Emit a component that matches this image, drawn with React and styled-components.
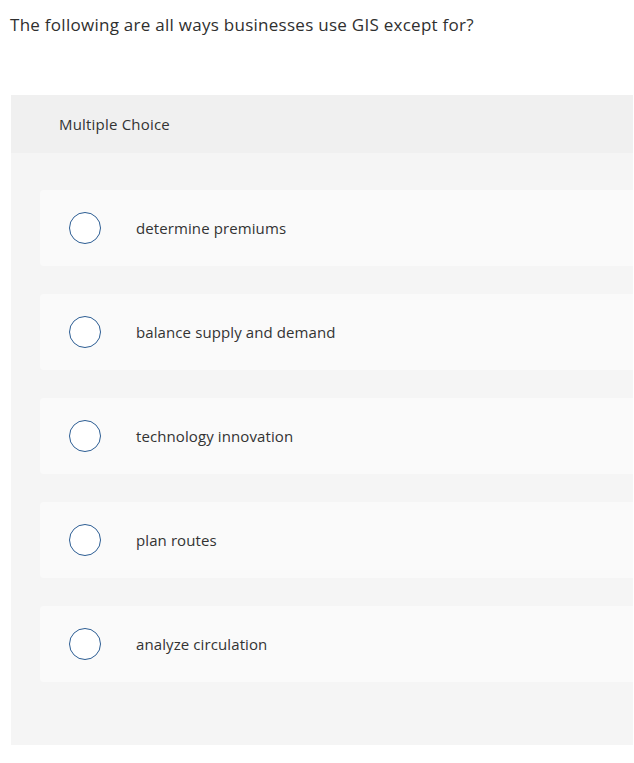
import React from "react";
import styled, { createGlobalStyle } from "styled-components";

const Global = createGlobalStyle`
  html, body { margin: 0; padding: 0; background: #ffffff; }
  body { font-family: "Open Sans", "Liberation Sans", sans-serif; color: #333333; }
  * { box-sizing: border-box; }
`;

const Page = styled.div`
  width: 634px;
  padding: 14px 0 0 0;
`;

const Question = styled.p`
  margin: 0 0 0 10px;
  font-size: 17px;
  line-height: 22px;
  letter-spacing: 0.27px;
  color: #2f2f2f;
`;

const Panel = styled.section`
  margin: 59px 1px 0 11px;
  background: #f5f5f5;
`;

const PanelHeader = styled.div`
  height: 58px;
  background: #f0f0f0;
  display: flex;
  align-items: center;
  padding-left: 48px;
  font-size: 15px;
  letter-spacing: 0.2px;
  color: #333333;
`;

const Options = styled.div`
  display: flex;
  flex-direction: column;
  gap: 28px;
  padding: 37px 0 63px 29px;
`;

const Option = styled.label`
  height: 76px;
  display: flex;
  align-items: center;
  background: #fafafa;
  border-radius: 4px 0 0 4px;
  padding-left: 29px;
  cursor: pointer;
`;

const Radio = styled.span`
  width: 32px;
  height: 32px;
  border-radius: 50%;
  border: 1.5px solid #2c5d93;
  background: #ffffff;
  flex: none;
`;

const OptionText = styled.span`
  margin-left: 35px;
  font-size: 15px;
  letter-spacing: 0.1px;
  color: #333333;
`;

const choices = [
  "determine premiums",
  "balance supply and demand",
  "technology innovation",
  "plan routes",
  "analyze circulation",
];

export default function App() {
  return (
    <Page>
      <Global />
      <Question>The following are all ways businesses use GIS except for?</Question>
      <Panel>
        <PanelHeader>Multiple Choice</PanelHeader>
        <Options>
          {choices.map((c) => (
            <Option key={c}>
              <Radio />
              <OptionText>{c}</OptionText>
            </Option>
          ))}
        </Options>
      </Panel>
    </Page>
  );
}
